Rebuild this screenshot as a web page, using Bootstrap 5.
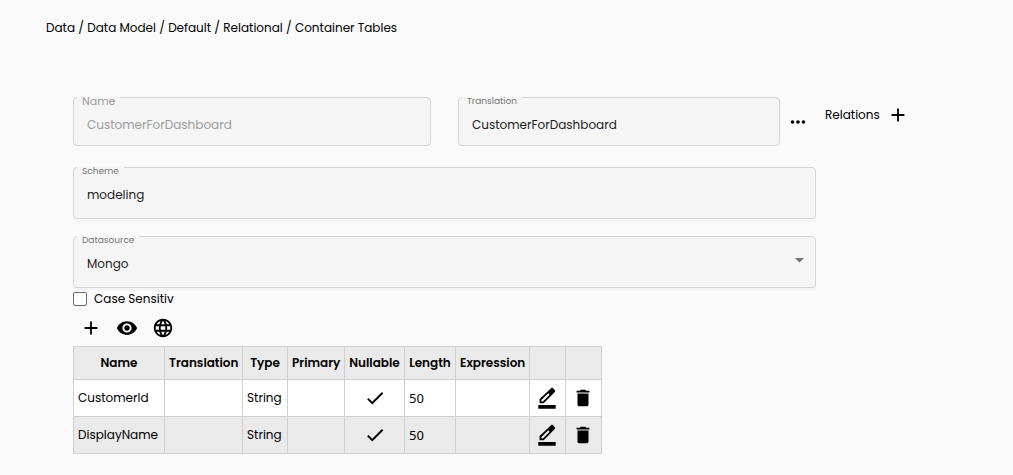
<!DOCTYPE html>
<html lang="en">
<head>
<meta charset="utf-8">
<meta name="viewport" content="width=device-width, initial-scale=1">
<title>Container Tables</title>
<link href="https://cdn.jsdelivr.net/npm/bootstrap@5.3.0/dist/css/bootstrap.min.css" rel="stylesheet">
<style>
  body { background: #fafafa; color: #000; font-family: Poppins, Inter, "Open Sans", sans-serif; font-size: 12px; line-height: 20px; }
  .crumbs { padding: 18px 46px 0; }
  .crumbs a { color: #000; text-decoration: none; }
  .editor { padding: 59px 0 20px 73px; }
  .form-side { min-width: 0; }
  .relations { width: 197px; padding-left: 9px; }
  .pair { gap: 27px; margin-bottom: 21px; }
  .half { flex: 1 1 0; min-width: 0; }
  .field { position: relative; background: #f5f5f5; border-radius: 5px; }
  .field.tall { padding-bottom: 3px; border-radius: 5px 5px 0 0; }
  .field.tall + .field.tall { margin-top: 14px; }
  .field .form-control, .field .form-select { height: 49px; padding: 7px 13px 0; border: 1px solid #d5d5d5; border-radius: 4px; background-color: #f5f5f5; color: #1c1c1c; font-size: 12px; line-height: 20px; }
  .field.tall .form-control, .field.tall .form-select { height: 52px; padding-bottom: 3px; }
  .field .form-select { background-image: none; }
  .field .form-control:disabled { color: #9c9c9c; opacity: 1; }
  .field label { position: absolute; top: 0; left: 4px; padding: 0 5px; height: 9px; line-height: 8px; font-size: 9px; color: #777; background: #f5f5f5; z-index: 1; }
  .field label.wide { font-size: 11px; line-height: 9px; color: #9c9c9c; }
  .field .caret { position: absolute; right: 12px; top: 22px; pointer-events: none; }
  .tool { width: 36px; height: 36px; padding: 0; border: 0; border-radius: 4px; display: inline-flex; align-items: center; justify-content: center; color: #000; }
  .tool svg { display: block; fill: currentColor; }
  .check-row { height: 15px; gap: 7px; }
  .check-row .form-check-input { width: 14px; height: 14px; margin: 0; border: 1px solid #6b6b6b; border-radius: 2px; background-color: #fff; }
  .attributes { table-layout: fixed; width: 529px; margin: 0; border-color: #d0d0d0; color: #000; }
  .attributes > :not(caption) > * > * { padding: 0 4px; border: 1px solid #d0d0d0; vertical-align: middle; color: #000; white-space: nowrap; box-shadow: none; }
  .attributes th { height: 33px; background: #eaeaea; font-weight: 600; text-align: center; }
  .attributes td { height: 37px; background: #fff; }
  .attributes tbody tr:nth-child(even) td { background: #eaeaea; }
  .attributes > :not(caption) > * > .icon-cell { padding: 0; }
  .attributes .tool { width: 34px; }
  .attributes .digits { font-family: "Noto Sans", sans-serif; font-size: 13px; }
  .c-name { width: 91px } .c-trans { width: 78px } .c-type { width: 45px } .c-prim { width: 57px }
  .c-null { width: 60px } .c-len { width: 51px } .c-expr { width: 74px } .c-act { width: 36px }
</style>
</head>
<body>
<svg class="d-none" aria-hidden="true">
  <symbol id="i-plus" viewBox="0 0 24 24"><path d="M19 13h-6v6h-2v-6H5v-2h6V5h2v6h6v2z"/></symbol>
  <symbol id="i-more" viewBox="0 0 24 24"><path d="M6 10a2 2 0 1 0 0 4 2 2 0 0 0 0-4zm12 0a2 2 0 1 0 0 4 2 2 0 0 0 0-4zm-6 0a2 2 0 1 0 0 4 2 2 0 0 0 0-4z"/></symbol>
  <symbol id="i-eye" viewBox="0 0 24 24"><path d="M12 4.5C7 4.5 2.73 7.61 1 12c1.73 4.39 6 7.5 11 7.5s9.27-3.11 11-7.5c-1.73-4.39-6-7.5-11-7.5zM12 17c-2.76 0-5-2.24-5-5s2.24-5 5-5 5 2.24 5 5-2.24 5-5 5zm0-8c-1.66 0-3 1.34-3 3s1.34 3 3 3 3-1.34 3-3-1.34-3-3-3z"/></symbol>
  <symbol id="i-globe" viewBox="0 0 24 24"><path d="M11.99 2C6.47 2 2 6.48 2 12s4.47 10 9.99 10C17.52 22 22 17.52 22 12S17.52 2 11.99 2zm6.93 6h-2.95c-.32-1.25-.78-2.45-1.38-3.56 1.84.63 3.37 1.91 4.33 3.56zM12 4.04c.83 1.2 1.48 2.53 1.91 3.96h-3.82c.43-1.43 1.08-2.76 1.91-3.96zM4.26 14C4.1 13.36 4 12.69 4 12s.1-1.36.26-2h3.38c-.08.66-.14 1.32-.14 2s.06 1.34.14 2H4.26zm.82 2h2.95c.32 1.25.78 2.45 1.38 3.56-1.84-.63-3.37-1.9-4.33-3.56zm2.95-8H5.08c.96-1.66 2.49-2.93 4.33-3.56C8.81 5.55 8.35 6.75 8.03 8zM12 19.96c-.83-1.2-1.48-2.53-1.91-3.96h3.82c-.43 1.43-1.08 2.76-1.91 3.96zM14.34 14H9.66c-.09-.66-.16-1.32-.16-2s.07-1.35.16-2h4.68c.09.65.16 1.32.16 2s-.07 1.34-.16 2zm.25 5.56c.6-1.11 1.06-2.31 1.38-3.56h2.95c-.96 1.65-2.49 2.93-4.33 3.56zM16.36 14c.08-.66.14-1.32.14-2s-.06-1.34-.14-2h3.38c.16.64.26 1.31.26 2s-.1 1.36-.26 2h-3.38z"/></symbol>
  <symbol id="i-check" viewBox="0 0 24 24"><path d="M9 16.17 4.83 12l-1.42 1.41L9 19 21 7l-1.41-1.41z"/></symbol>
  <symbol id="i-edit" viewBox="0 0 24 24"><path fill-rule="evenodd" d="M2.500 19.700h19v4h-19zM16.400 1.400 3.900 13.200v4.500h4.500L20.300 5.800c.7-.7.700-1.800 0-2.500L18.600 1.400c-.6-.6-1.600-.6-2.200 0zM7.500 15.700H5.900v-1.600L13.400 6.900l1.500 1.500z"/></symbol>
  <symbol id="i-trash" viewBox="0 0 24 24"><path d="M6 19c0 1.100.9 2 2 2h8c1.100 0 2-.9 2-2V7H6v12zM19 4h-3.500l-1-1h-5l-1 1H5v2h14V4z"/></symbol>
</svg>

<nav class="crumbs" aria-label="Breadcrumb">
  <a href="#">Data</a> / <a href="#">Data Model</a> / <a href="#">Default</a> / <a href="#">Relational</a> / <a href="#">Container Tables</a>
</nav>

<main class="editor">
  <div class="d-flex align-items-start">
    <form class="form-side flex-grow-1">
      <div class="pair d-flex">
        <div class="half field">
          <label class="wide" for="name">Name</label>
          <input id="name" class="form-control shadow-none" value="CustomerForDashboard" disabled>
        </div>
        <div class="half d-flex align-items-center">
          <div class="field flex-grow-1">
            <label for="translation">Translation</label>
            <input id="translation" class="form-control shadow-none" value="CustomerForDashboard">
          </div>
          <button type="button" class="btn tool flex-shrink-0" aria-label="More"><svg width="22" height="22"><use href="#i-more"/></svg></button>
        </div>
      </div>
      <div class="field tall">
        <label for="scheme">Scheme</label>
        <input id="scheme" class="form-control shadow-none" value="modeling">
      </div>
      <div class="field tall">
        <label for="source">Datasource</label>
        <select id="source" class="form-select shadow-none"><option>Mongo</option></select>
        <svg class="caret" width="9" height="5" viewBox="0 0 9 5"><path d="M0 0h9L4.500 4.500z" fill="#757575"/></svg>
      </div>
      <div class="check-row d-flex align-items-center">
        <input class="form-check-input shadow-none" type="checkbox" id="case">
        <label for="case">Case Sensitiv</label>
      </div>
      <div class="d-flex mt-1">
        <button type="button" class="btn tool" aria-label="Add"><svg width="22" height="22"><use href="#i-plus"/></svg></button>
        <button type="button" class="btn tool" aria-label="Show"><svg width="22" height="22"><use href="#i-eye"/></svg></button>
        <button type="button" class="btn tool" aria-label="Languages"><svg width="22" height="22"><use href="#i-globe"/></svg></button>
      </div>
    </form>
    <div class="relations d-flex align-items-center flex-shrink-0">
      <span>Relations</span>
      <button type="button" class="btn tool" aria-label="Add relation"><svg width="22" height="22"><use href="#i-plus"/></svg></button>
    </div>
  </div>

  <table class="table attributes">
    <colgroup><col class="c-name"><col class="c-trans"><col class="c-type"><col class="c-prim"><col class="c-null"><col class="c-len"><col class="c-expr"><col class="c-act"><col class="c-act"></colgroup>
    <thead>
      <tr><th>Name</th><th>Translation</th><th>Type</th><th>Primary</th><th>Nullable</th><th>Length</th><th>Expression</th><th></th><th></th></tr>
    </thead>
    <tbody>
      <tr>
        <td>CustomerId</td><td></td><td>String</td><td></td>
        <td class="text-center"><svg width="22" height="22"><use href="#i-check"/></svg></td>
        <td class="digits">50</td><td></td>
        <td class="icon-cell"><button type="button" class="btn tool" aria-label="Edit"><svg width="22" height="22"><use href="#i-edit"/></svg></button></td>
        <td class="icon-cell"><button type="button" class="btn tool" aria-label="Delete"><svg width="22" height="22"><use href="#i-trash"/></svg></button></td>
      </tr>
      <tr>
        <td>DisplayName</td><td></td><td>String</td><td></td>
        <td class="text-center"><svg width="22" height="22"><use href="#i-check"/></svg></td>
        <td class="digits">50</td><td></td>
        <td class="icon-cell"><button type="button" class="btn tool" aria-label="Edit"><svg width="22" height="22"><use href="#i-edit"/></svg></button></td>
        <td class="icon-cell"><button type="button" class="btn tool" aria-label="Delete"><svg width="22" height="22"><use href="#i-trash"/></svg></button></td>
      </tr>
    </tbody>
  </table>
</main>
<script src="https://cdn.jsdelivr.net/npm/bootstrap@5.3.0/dist/js/bootstrap.bundle.min.js"></script>
</body>
</html>
